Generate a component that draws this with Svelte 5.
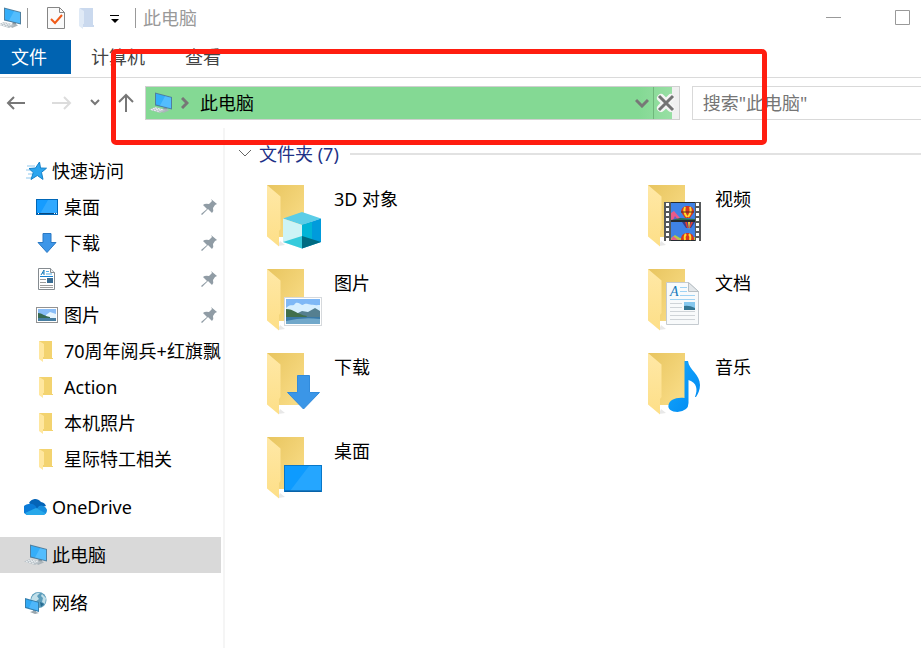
<script>
  let query = '';

  const quickAccess = [
    { name: '桌面', icon: 'desktop', pinned: true },
    { name: '下载', icon: 'download', pinned: true },
    { name: '文档', icon: 'document', pinned: true },
    { name: '图片', icon: 'picture', pinned: true },
    { name: '70周年阅兵+红旗飘', icon: 'folder', pinned: false },
    { name: 'Action', icon: 'folder', pinned: false },
    { name: '本机照片', icon: 'folder', pinned: false },
    { name: '星际特工相关', icon: 'folder', pinned: false }
  ];

  const roots = [
    { name: 'OneDrive', icon: 'onedrive' },
    { name: '此电脑', icon: 'pc' },
    { name: '网络', icon: 'network' }
  ];

  const folders = [
    { name: '3D 对象', kind: 'cube' },
    { name: '视频', kind: 'video' },
    { name: '图片', kind: 'picture' },
    { name: '文档', kind: 'document' },
    { name: '下载', kind: 'download' },
    { name: '音乐', kind: 'music' },
    { name: '桌面', kind: 'desktop' }
  ];

  let selected = '此电脑';
</script>

{#snippet smallIcon(name)}
  <svg class="icon" viewBox="0 0 24 24" width="24" height="24" aria-hidden="true">
    {#if name === 'pc'}
      <path d="M15 15l3 1v4l-4-1z" fill="#8d989f" />
      <path d="M12 19.500l6-1.500 2 1.500-6 2.500z" fill="#aab4ba" />
      <path d="M6 1.500l17 4.500v12.500L6 14.500z" fill="#4f7f9f" />
      <path d="M7 2.800l15 4v10.500L7 13.500z" fill="#35aef9" />
      <path d="M16 5.200l6 1.600v10.500l-11-2.800z" fill="#67c6ff" opacity=".6" />
      <path d="M0 18.500L6 16l11 2.700-6 3.300z" fill="#b9c2c8" />
      <path d="M2 18.500l8 2M4 17.500l9 2M6 16.800l8 2" stroke="#eef2f4" stroke-dasharray="2 1" />
    {:else if name === 'star'}
      <path d="M3 7h8M2 11h6M4 15h5M2 19h5" stroke="#8fc8ed" stroke-width="1" />
      <path d="M15.500 3l1 6 6 .200-5 4.200 1.500 7-5.700-3.900-6.300 4 2.300-6.900L5 9.500l6.500-.500z" fill="#2ba5ef" stroke="#1581c9" />
    {:else if name === 'desktop'}
      <rect x=".5" y="4.500" width="21" height="15" fill="#159cff" stroke="#0067b8" />
      <path d="M12 5h9v14H4z" fill="#45b3ff" opacity=".6" />
      <path d="M1 18.500h20" stroke="#06477e" />
      <path d="M2 18.500h1M18 18.500h1M20 18.500h1" stroke="#fff" />
    {:else if name === 'download'}
      <path d="M7 2.500h8v9h5L11 21.500 2 11.500h5z" fill="#3d96e8" stroke="#2b79c4" />
    {:else if name === 'document'}
      <path d="M2.500 1.500h12l4 4v17h-16z" fill="#fff" stroke="#858b90" />
      <path d="M14.500 1.500v4h4" fill="#eee" stroke="#858b90" />
      <path d="M4 9.500h13" stroke="#1681d2" stroke-width="1" />
      <path d="M10 4.500h3M10 7h6" stroke="#55aee7" />
      <path d="M4 12.500h6M4 15.500h6M4 18.500h13M4 20.500h13" stroke="#9c9c9c" />
      <rect x="11" y="11" width="6" height="5" fill="#376b93" />
      <path d="M5 8l3-5v5M6 6h2" stroke="#167abb" fill="none" />
    {:else if name === 'picture'}
      <rect x=".5" y="4.500" width="21" height="15" fill="#fff" stroke="#929292" />
      <path d="M2 6h18v12H2z" fill="#89bdf7" />
      <path d="M10 12l4-3 6 2v4H10z" fill="#e5f5ff" />
      <path d="M2 10c4 0 6 3 12 4v2H2z" fill="#376950" />
      <path d="M2 15h18v3H2z" fill="#477ea2" />
    {:else if name === 'folder'}
      <path d="M3 2h13v17h1v1H7z" fill="#f3d36f" />
      <path d="M3 2l5 3v13H7v5l-4-3z" fill="#ffe79f" />
    {:else if name === 'onedrive'}
      <path d="M5 8a7 7 0 0 1 12-1 6 6 0 0 1 5 4l-10 3z" fill="#0564b8" />
      <path d="M4.500 9a7 7 0 0 1 7 2l4 7-11 2a5.500 5.500 0 0 1 0-11z" fill="#0a7bd8" />
      <path d="M15 11a6 6 0 0 1 8 4q0 5-5 5H8z" fill="#168dde" />
      <path d="M1 18l11-5 9 5q1 1-2 2H4q-2 0-3-2z" fill="#28a8ea" />
    {:else if name === 'network'}
      <circle cx="14.500" cy="9" r="8" fill="#5c9dbb" />
      <path d="M8 6q4-5 8-4l-3 3 2 3-4 3-4-2zM18 3l4 4-1 6-3-2 1-4-2-2z" fill="#c1dfe9" />
      <path d="M16 11l4 2-3 3z" fill="#276b91" />
      <path d="M9 18l3 1v2l3 1-4 1-5-2 3-1z" fill="#9aa6ad" />
      <path d="M1 7l14 4v10L1 17z" fill="#347fae" />
      <path d="M2 8.500l12 3.300v7.700L2 16z" fill="#31a9f4" />
      <path d="M8 10l6 1.800v7.700l-9-2.600z" fill="#63c2ff" opacity=".6" />
    {/if}
  </svg>
{/snippet}

{#snippet folderIcon(kind)}
  <svg class="folder-icon" viewBox="0 0 56 64" width="56" height="64" aria-hidden="true">
    <defs>
      <linearGradient id="back-{kind}" x1="0" y1="0" x2="1" y2="1">
        <stop offset="0" stop-color="#e8c55f" /><stop offset="1" stop-color="#fbdf8b" />
      </linearGradient>
      <linearGradient id="flap-{kind}" x1="0" y1="0" x2="0" y2="1">
        <stop offset="0" stop-color="#ffe8a6" /><stop offset="1" stop-color="#fddf88" />
      </linearGradient>
      <linearGradient id="fill-{kind}" x1="0" y1="0" x2="1" y2="1">
        <stop offset="0" stop-color="#16a9ff" /><stop offset="1" stop-color="#0088f0" />
      </linearGradient>
    </defs>
    <path d="M12 61l7-1-5-4z" fill="#e8e8e8" />
    <path d="M1 0h37v52H8z" fill="url(#back-{kind})" />
    <path d="M1 0l13.500 11.500V44L13 46v15.500L1 51.500z" fill="url(#flap-{kind})" />
    {#if kind === 'cube'}
      <path d="M17 33.500L36 27l19 6.500L36 40z" fill="#5bcde7" />
      <path d="M17 33.500L36 40v23.500L17 57z" fill="#cdf3f6" />
      <path d="M55 33.500L36 40v23.500L55 57z" fill="#009bdc" />
      <path d="M36 40l10-3v18l-10-3z" fill="#00b4d6" />
      <path d="M17 57l19-6v12.500z" fill="#36cbdc" />
      <path d="M36 51l19 6-19 6.500z" fill="#006b82" />
    {:else if kind === 'picture'}
      <rect x="18.500" y="28.500" width="37" height="28" fill="#fff" stroke="#d6d9dc" />
      <rect x="20" y="30" width="34" height="25" fill="#7fb8f6" />
      <path d="M20 39c4-4 6-2 8-3 3-5 6 0 9 0 4-3 6 1 17 0v11H20z" fill="#d7efff" />
      <path d="M28 46l8-4 6 1 7-4 5 3v6H28z" fill="#557f90" />
      <path d="M20 40c8 0 10 5 21 7l-2 3H20z" fill="#416f4c" />
      <path d="M20 48h34v7H20z" fill="#3a79a6" />
      <path d="M20 52q16-4 34-2v5H20z" fill="#71a8ca" />
    {:else if kind === 'download'}
      <path d="M31.500 22.500h12v17h10L37.500 56l-16-16.500h10z" fill="#3b96e7" stroke="#318bdc" />
    {:else if kind === 'desktop'}
      <rect x="18.500" y="28.500" width="37" height="26" fill="#0d9bff" stroke="#0877c8" />
      <path d="M43 29h12v25H24z" fill="#36adff" opacity=".6" />
      <path d="M19 54h36" stroke="#064e88" />
    {:else if kind === 'video'}
      <rect x="17" y="17" width="37" height="39" fill="#55585a" />
      <path d="M20.500 18v38M50.500 18v38" stroke="#fff" stroke-width="3" stroke-dasharray="3 2" />
      <path d="M24 17h24v39H24z" fill="#252b31" />
      <path d="M24 18h24v17H24zM24 37h24v18H24z" fill="#3f82e6" />
      <path d="M24 28l3-2 6 7v2h-9z" fill="#e95a8a" />
      <path d="M26 35l2-4 3 4z" fill="#5a62d0" />
      <path d="M24 35l9-2 15 1v1z" fill="#286e53" />
      <path d="M34 27c0-8 13-8 13 0l-4 6h-5z" fill="#d8371f" />
      <path d="M38 22q-2 5 2 10M43 22q2 5-2 10" stroke="#ffdc2d" stroke-width="2" fill="none" />
      <path d="M34 27h13" stroke="#5a2a20" />
      <path d="M35 37h13l-4 6h-5z" fill="#3c3d8a" />
      <path d="M38 37h2l1 6h-1zM44 37h2l-3 6h-1z" fill="#e7402c" />
      <path d="M41 37h2l-1 8z" fill="#f7d838" />
      <path d="M24 53l4-3 5 3 15-1v3H24z" fill="#b4c74b" />
      <path d="M24 55l2-4 5 4z" fill="#e95a8a" />
      <path d="M34 54c0-8 13-8 13 0v1H34z" fill="#d8371f" />
      <path d="M38 55q-1-4 1-6M43 55q1-4-1-6" stroke="#ffdc2d" stroke-width="2" fill="none" />
    {:else if kind === 'document'}
      <path d="M19.500 13.500h22l10 9v33h-32z" fill="#f8fafb" stroke="#c5cbd0" />
      <path d="M41.500 13.500v9h10z" fill="#e3e7ea" stroke="#b7bfc4" />
      <text class="document-letter" x="23" y="27">A</text>
      <path d="M33 18.500h7M33 22.500h7M33 26.500h15M23 30.500h25" stroke="#9fd3f4" />
      <path d="M23 34.500h12M23 38.500h12M23 42.500h25M23 46.500h25M23 50.500h25" stroke="#cfd4d8" />
      <rect x="37" y="33" width="11" height="8" fill="#86c8ee" />
      <path d="M37 37q5-1 11 2v2H37z" fill="#347693" />
    {:else if kind === 'music'}
      <path d="M37.500 8H41c1 9 12 13 12 24 0 5-2 9-4 12h-1c3-8 2-14-6.500-17v23q0 8-11 9c-6 0-10-3-9-7 1-5 7-8 16-7z" fill="url(#fill-music)" />
    {/if}
  </svg>
{/snippet}

<div class="explorer">
  <header class="title-bar">
    {@render smallIcon('pc')}
    <span class="divider first"></span>
    <button class="plain properties" aria-label="属性">
      <svg width="18" height="22" viewBox="0 0 18 22">
        <path d="M.5.500h12l5 5v16H.5z" fill="#fafafa" stroke="#858585" />
        <path d="M12.500.500v5h5" fill="none" stroke="#858585" />
        <path d="M4 12l4 4 7-8" fill="none" stroke="#f05a18" stroke-width="2" />
      </svg>
    </button>
    <button class="plain new-folder" aria-label="新建文件夹">
      <svg width="16" height="22" viewBox="0 0 16 22">
        <path d="M1 1h13v17h1v2H4z" fill="#cad9ee" />
        <path d="M0 1l5 3v13H4v5l-4-3z" fill="#e0eaf6" />
      </svg>
    </button>
    <button class="plain customize" aria-label="自定义快速访问工具栏">
      <svg width="10" height="10" viewBox="0 0 10 10">
        <path d="M0 2.500h9" stroke="#000" /><path d="M1 6h8L5 10z" />
      </svg>
    </button>
    <span class="divider"></span>
    <h1>此电脑</h1>
    <div class="window-buttons">
      <button class="plain" aria-label="最小化">
        <svg width="16" height="16"><path d="M0 7.500h15" stroke="#999" /></svg>
      </button>
      <button class="plain" aria-label="最大化">
        <svg width="16" height="16"><path d="M.5.500h14v14H.5z" fill="none" stroke="#999" /></svg>
      </button>
    </div>
  </header>

  <nav class="ribbon">
    <button class="tab file">文件</button>
    <button class="tab">计算机</button>
    <button class="tab">查看</button>
  </nav>

  <div class="toolbar">
    <div class="history">
      <button class="plain" aria-label="后退">
        <svg width="20" height="16" viewBox="0 0 20 16"><path d="M19 8H2M8 2L2 8l6 6" fill="none" stroke="#777" stroke-width="2" /></svg>
      </button>
      <button class="plain forward" aria-label="前进" disabled>
        <svg width="20" height="16" viewBox="0 0 20 16"><path d="M0 8h18M12 2l6 6-6 6" fill="none" stroke="#dcdcdc" stroke-width="2" /></svg>
      </button>
      <button class="plain recent" aria-label="最近浏览的位置">
        <svg width="10" height="8" viewBox="0 0 10 8"><path d="M1 1l4 4 4-4" fill="none" stroke="#777" stroke-width="2" /></svg>
      </button>
      <button class="plain up" aria-label="上移">
        <svg width="16" height="20" viewBox="0 0 16 20"><path d="M8 19V2M1 9l7-7 7 7" fill="none" stroke="#777" stroke-width="2" /></svg>
      </button>
    </div>
    <div class="address">
      {@render smallIcon('pc')}
      <svg class="crumb-arrow" width="8" height="12" viewBox="0 0 8 12"><path d="M1 1l5 5-5 5" fill="none" stroke="#777" stroke-width="3" /></svg>
      <span>此电脑</span>
      <button class="plain address-list" aria-label="以前的位置">
        <svg width="14" height="10" viewBox="0 0 14 10"><path d="M1 2l6 6 6-6" fill="none" stroke="#777" stroke-width="3" /></svg>
      </button>
      <button class="plain stop" aria-label="停止">
        <svg width="20" height="22" viewBox="0 0 20 22">
          <path d="M5 6l10 10M15 6L5 16" stroke="#f4f4f4" stroke-width="8" stroke-linecap="round" />
          <path d="M3 4l14 14M17 4L3 18" stroke="#737373" stroke-width="3" />
        </svg>
      </button>
    </div>
    <input class="search" type="text" aria-label="搜索" placeholder={'搜索"此电脑"'} bind:value={query} />
  </div>

  <div class="content">
    <nav class="sidebar">
      <button class="item">
        {@render smallIcon('star')}
        <span class="name">快速访问</span>
      </button>
      {#each quickAccess as item}
        <button class="item child">
          {@render smallIcon(item.icon)}
          <span class="name">{item.name}</span>
          {#if item.pinned}
            <svg class="pin" width="16" height="16" viewBox="0 0 16 16">
              <path d="M10 0l6 5-2 1-2 3q1 3-1 5l-4-4-6 6-1-1 6-5-4-4q2-2 6-1l3-3z" fill="#909ca5" />
            </svg>
          {/if}
        </button>
      {/each}
      {#each roots as item}
        <button class="item root" class:selected={item.name === selected} on:click={() => (selected = item.name)}>
          {@render smallIcon(item.icon)}
          <span class="name">{item.name}</span>
        </button>
      {/each}
    </nav>

    <main>
      <div class="group">
        <svg width="14" height="10" viewBox="0 0 14 10"><path d="M1 1l6 6 6-6" fill="none" stroke="#666" /></svg>
        <h2>文件夹 (7)</h2>
        <span class="rule"></span>
      </div>
      <div class="folders">
        {#each folders as folder}
          <div class="folder">
            {@render folderIcon(folder.kind)}
            <span>{folder.name}</span>
          </div>
        {/each}
      </div>
    </main>
  </div>

  <div class="highlight"></div>
</div>

<style>
  :global(body) {
    background: #fff;
  }

  .explorer {
    position: relative;
    display: flex;
    flex-direction: column;
    min-height: 100vh;
    overflow: hidden;
    color: #000;
    font-family: 'Noto Sans', 'Noto Sans CJK SC', sans-serif;
    font-size: 18px;
    line-height: 24px;
  }

  svg {
    display: block;
    flex: none;
  }

  button,
  input {
    box-sizing: border-box;
    margin: 0;
    font: inherit;
  }

  .plain {
    display: flex;
    align-items: center;
    justify-content: center;
    flex: none;
    padding: 0;
    border: 0;
    background: none;
  }

  h1,
  h2 {
    margin: 0;
    font-size: 18px;
    font-weight: 400;
  }

  .title-bar {
    display: flex;
    align-items: center;
    height: 36px;
    padding-bottom: 4px;
  }

  .title-bar .icon {
    margin-left: -2px;
  }

  .divider {
    width: 1px;
    height: 20px;
    margin-right: 7px;
    background: #999;
  }

  .divider.first {
    margin: 0 19px 0 5px;
  }

  .properties {
    margin-right: 14px;
  }

  .new-folder {
    margin-right: 15px;
  }

  .customize {
    margin-right: 15px;
  }

  .title-bar h1 {
    color: #999;
  }

  .window-buttons {
    display: flex;
    gap: 53px;
    margin-left: auto;
    padding-right: 10px;
  }

  .ribbon {
    display: flex;
    height: 37px;
    border-bottom: 1px solid #dadada;
  }

  .tab {
    height: 34px;
    padding: 0 20px;
    border: 0;
    background: none;
    color: #444;
  }

  .tab.file {
    padding: 0 24px 0 11px;
    background: #0063b1;
    color: #fff;
  }

  .toolbar {
    display: flex;
    align-items: center;
    height: 50px;
  }

  .history {
    display: flex;
    align-items: center;
    flex: none;
    padding: 0 11px 0 6px;
  }

  .forward {
    margin-left: 26px;
  }

  .recent {
    margin-left: 18px;
  }

  .up {
    margin-left: 18px;
  }

  .address {
    display: flex;
    align-items: center;
    flex: 7 1 0;
    box-sizing: border-box;
    height: 34px;
    border: 1px solid #d0d0d0;
    background: linear-gradient(to right, #84d994 calc(100% - 40px), #98dfa4 calc(100% - 7px), #f0f0f0 calc(100% - 7px));
  }

  .address .icon {
    margin-left: 3px;
  }

  .crumb-arrow {
    margin: 0 11px 0 8px;
  }

  .address-list {
    width: 22px;
    margin-left: auto;
  }

  .stop {
    width: 26px;
    height: 32px;
    border-left: 1px solid #70b77c;
  }

  .search {
    flex: 3 1 0;
    min-width: 0;
    height: 34px;
    margin-left: 12px;
    padding: 0;
    border: 1px solid #d9d9d9;
    border-right: 0;
    border-radius: 0;
    background: #fff;
    outline: none;
    text-indent: 10px;
  }

  .search::placeholder {
    color: #757575;
    opacity: 1;
  }

  .content {
    display: flex;
    flex: 1;
  }

  .sidebar {
    flex: none;
    width: 221px;
    padding: 25px 2px 24px 0;
    border-right: 2px solid #f5f5f5;
  }

  .item {
    display: flex;
    align-items: center;
    gap: 4px;
    width: 100%;
    height: 36px;
    padding: 0 0 0 24px;
    border: 0;
    background: none;
    color: #000;
    text-align: left;
  }

  .item.child {
    padding-left: 36px;
  }

  .item.root {
    margin-top: 12px;
  }

  .item.selected {
    background: #d9d9d9;
  }

  .name {
    flex: 1;
    min-width: 0;
    overflow: hidden;
    white-space: nowrap;
  }

  .pin {
    margin-right: 4px;
  }

  main {
    flex: 1;
    min-width: 0;
    padding: 14px 0 0 13px;
  }

  .group {
    display: flex;
    align-items: center;
    gap: 7px;
  }

  .group h2 {
    color: #1e3287;
  }

  .rule {
    flex: 1;
    height: 2px;
    margin-left: 4px;
    background: #e2e2e2;
  }

  .folders {
    display: grid;
    grid-template-columns: minmax(0, 381px) 1fr;
    grid-auto-rows: 84px;
    padding: 19px 0 0 28px;
  }

  .folder {
    display: flex;
    align-items: flex-start;
    gap: 12px;
  }

  .folder span {
    padding-top: 2px;
  }

  .document-letter {
    fill: #167abd;
    font: italic 14px 'Liberation Serif', serif;
  }

  /* marks the address bar, drawn over everything else */
  .highlight {
    position: absolute;
    top: 49px;
    right: 154px;
    left: 111px;
    box-sizing: border-box;
    height: 96px;
    border: 5px solid #ff1d10;
    border-radius: 5px;
    pointer-events: none;
  }
</style>
